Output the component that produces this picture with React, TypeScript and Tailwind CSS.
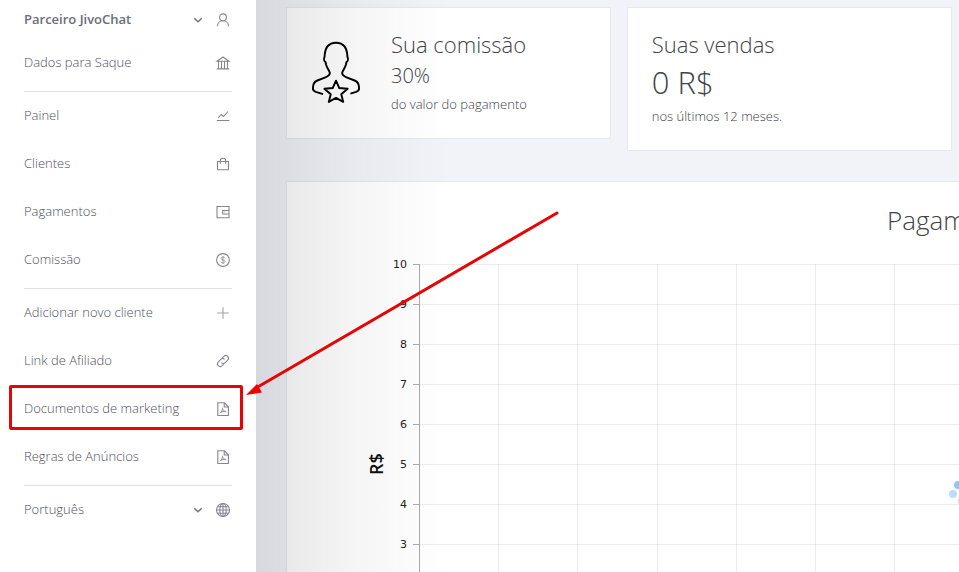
import type { ReactNode } from 'react';

const ICONS: Record<string, ReactNode> = {
  user: (
    <>
      <circle cx="9" cy="6.3" r="3.4" />
      <path d="M3.4 15.2c.1-3 2.3-5.5 5.6-5.5s5.5 2.5 5.6 5.5" />
    </>
  ),
  bank: <path d="M3 7.3 9 3l6 4.3ZM2.8 14.9h12.4M4.5 7.5v7M7.5 7.5v7M10.5 7.5v7M13.5 7.5v7" />,
  chart: <path d="M2.8 13.5h12.6M4 11l3.2-3.5 2.3 2L14 4.5" />,
  bag: <path d="M3.5 6.5h11v8.2h-11ZM6.3 8.7V6a2.7 2.7 0 0 1 5.4 0v2.7" />,
  wallet: (
    <>
      <path d="M3 3.5h12v11.3H3ZM15 7.5H8.7V11H15" />
      <circle cx="10.7" cy="9.2" r=".1" />
    </>
  ),
  dollar: (
    <>
      <circle cx="9" cy="9" r="6.4" />
      <path d="M11 7.4c-.1-.8-.9-1.3-2-1.3s-2 .5-2 1.4c0 2 4.1.9 4.1 3 0 .9-.9 1.5-2.1 1.500s-2-.6-2.1-1.500M9 5v8" strokeWidth=".8" />
    </>
  ),
  plus: <path d="M9 3.2v11.6M3.2 9h11.6" strokeOpacity=".75" />,
  link: (
    <>
      <path d="m8.3 5.9 1.8-1.8a2.7 2.7 0 0 1 3.8 3.8l-2.7 2.7a2.7 2.7 0 0 1-3.8 0" />
      <path d="m9.7 12.1-1.8 1.8a2.7 2.7 0 0 1-3.8-3.8l2.7-2.7a2.7 2.7 0 0 1 3.8 0" />
    </>
  ),
  pdf: (
    <>
      <path d="M3.8 2.8h6.6l4 4v8.7H3.8ZM10.2 3v4h4" />
      <path d="M8.5 7.8c.1 2-.9 4-2.3 5.3M8.6 8.5c.3 1.7 1.5 2.9 3.5 3.3M6.8 12.3c1.3-.8 3-1 4.7-.8" strokeWidth=".9" />
    </>
  ),
  globe: (
    <>
      <circle cx="9" cy="9" r="6.5" />
      <ellipse cx="9" cy="9" rx="3.2" ry="6.5" />
      <path d="M2.5 9h13M9 2.5v13M3.6 5.7h10.8M3.6 12.3h10.8" />
    </>
  ),
};

type Item = { label: string; icon: string; dropdown?: boolean; bold?: boolean; marked?: boolean };

const GROUPS: Item[][] = [
  [
    { label: 'Parceiro JivoChat', icon: 'user', dropdown: true, bold: true },
    { label: 'Dados para Saque', icon: 'bank' },
  ],
  [
    { label: 'Painel', icon: 'chart' },
    { label: 'Clientes', icon: 'bag' },
    { label: 'Pagamentos', icon: 'wallet' },
    { label: 'Comissão', icon: 'dollar' },
  ],
  [
    { label: 'Adicionar novo cliente', icon: 'plus' },
    { label: 'Link de Afiliado', icon: 'link' },
    { label: 'Documentos de marketing', icon: 'pdf', marked: true },
    { label: 'Regras de Anúncios', icon: 'pdf' },
  ],
  [{ label: 'Português', icon: 'globe', dropdown: true }],
];

const Y_LABELS = [10, 9, 8, 7, 6, 5, 4, 3, 2, 1, 0];
const COLUMNS = Array.from({ length: 15 }, (_, i) => Math.round(132 + i * 79.2));

function Icon({ name }: { name: string }) {
  return (
    <svg width="18" height="18" viewBox="0 0 18 18" fill="none" stroke="#85858f" strokeWidth="1.1" aria-hidden="true">
      {ICONS[name]}
    </svg>
  );
}

function NavItem({ item }: { item: Item }) {
  const content = (
    <>
      <span className={item.bold ? 'font-semibold text-[#6c6c7a]' : 'font-light'}>{item.label}</span>
      <span className="flex items-center gap-2.5">
        {item.dropdown && (
          <svg width="12" height="12" viewBox="0 0 12 12" fill="none" stroke="#74747e" strokeWidth="1.5" aria-hidden="true">
            <path d="m2.3 4.3 3.7 3.5 3.7-3.5" />
          </svg>
        )}
        <Icon name={item.icon} />
      </span>
    </>
  );
  const row = 'flex w-full items-center justify-between text-left';

  return (
    <li className={item.bold ? 'flex h-[39px]' : 'relative flex h-12'}>
      {item.dropdown ? (
        <button type="button" className={row}>{content}</button>
      ) : (
        <a href="#" className={row}>{content}</a>
      )}
      {item.marked && (
        <span className="pointer-events-none absolute top-0 -right-[11px] bottom-[3px] -left-[15px] rounded-xs border-3 border-[#e60505]" />
      )}
    </li>
  );
}

function PartnerIcon() {
  return (
    <svg width="50" height="64" viewBox="0 0 52 66" fill="none" stroke="#000" strokeWidth="2" strokeLinejoin="round" aria-hidden="true">
      <path d="M12.5 56 5 53.6c-2-.7-3-1.5-3-3.5 0-4 .7-6.6 4-8l9-3.5c3.5-1.4 4.5-2.5 4.6-4.5 0-2.3-2.6-4.2-3.8-8.3l-.7-3.2c-1.6-1-2-3.5-1-5.2C14.3 8 18.5 2.5 26 2.5S37.7 8 37.9 17.4c1 1.7.6 4.2-1 5.2l-.7 3.2c-1.2 4.1-3.8 6-3.8 8.3.1 2 1.1 3.1 4.6 4.5l9 3.5c3.3 1.4 4 4 4 8 0 2-1 2.8-3 3.5L41 55.5" />
      <path d="m26 42 3.4 7.7 8.7.8-6.6 5.6 2 8L26 59.9l-7.5 4.2 2-8-6.6-5.6 8.7-.8Z" />
    </svg>
  );
}

function Chart() {
  return (
    <svg className="block h-[440px] w-full" role="img" aria-label="Pagamentos em R$">
      <g stroke="#000" strokeOpacity=".07" shapeRendering="crispEdges">
        {Y_LABELS.map((label, i) => (
          <line key={label} x1="132" x2="1241" y1={14 + i * 40} y2={14 + i * 40} />
        ))}
        {COLUMNS.map(x => (
          <line key={x} x1={x} x2={x} y1="14" y2="414" />
        ))}
      </g>
      <g stroke="#aaa" shapeRendering="crispEdges">
        <line x1="132" x2="132" y1="14" y2="414" />
        {Y_LABELS.map((label, i) => (
          <line key={label} x1="126" x2="132" y1={14 + i * 40} y2={14 + i * 40} />
        ))}
      </g>
      <g fill="#222" fontSize="11" textAnchor="end" fontFamily="'DejaVu Sans', sans-serif">
        {Y_LABELS.map((label, i) => (
          <text key={label} x="120" y={18 + i * 40}>{label}</text>
        ))}
      </g>
      <text
        transform="translate(96 214) rotate(-90)"
        fill="#111"
        fontSize="18"
        fontWeight="600"
        textAnchor="middle"
        fontFamily="'Open Sans', sans-serif"
      >
        R$
      </text>
      <g fill="#8cc8ff">
        <circle cx="671" cy="235" r="4" />
        <circle cx="666" cy="244" r="4" opacity=".6" />
        <circle cx="675" cy="251" r="4" opacity=".7" />
      </g>
    </svg>
  );
}

export default function App() {
  return (
    <div className="relative flex h-screen overflow-hidden bg-[#f1f3f8] font-['Open_Sans','Noto_Sans',sans-serif] text-[#424347]">
      <nav className="w-64 shrink-0 bg-white px-6 text-[13px] text-[#50505c]" aria-label="Menu">
        {GROUPS.map((group, i) => (
          <ul key={i} className="border-b border-[#e1e1e6] pb-1 last:border-0">
            {group.map(item => (
              <NavItem key={item.label} item={item} />
            ))}
          </ul>
        ))}
      </nav>

      <main className="relative min-w-0 flex-1 overflow-hidden px-[30px] pt-[7px]">
        <div className="min-w-[1347px]">
          <div className="grid grid-cols-4 items-start gap-4">
            <section className="flex gap-[30px] border border-[#e5e8ed] bg-white px-6 pt-[22px] pb-6">
              <div className="flex shrink-0 items-center">
                <PartnerIcon />
              </div>
              <div className="whitespace-nowrap">
                <h2 className="text-[22px] leading-7 font-light">Sua comissão</h2>
                <p className="text-xl leading-9 font-light">30%</p>
                <p className="text-[13px] leading-5 font-light">do valor do pagamento</p>
              </div>
            </section>
            <section className="border border-[#e5e8ed] bg-white px-6 pt-[22px] pb-6">
              <h2 className="text-[22px] leading-7 font-light">Suas vendas</h2>
              <p className="text-[31px] leading-12 font-light">0 R$</p>
              <p className="text-[13px] leading-5 font-light">nos últimos 12 meses.</p>
            </section>
          </div>

          <section className="mt-[30px] border border-[#e5e8ed] bg-white pt-5">
            <h2 className="h-12 text-center text-[26px] leading-9 font-light">Pagamentos</h2>
            <Chart />
          </section>
        </div>
        <div className="pointer-events-none absolute inset-y-0 left-0 w-48 bg-linear-to-r from-black/11 via-black/4 to-transparent" />
      </main>

      <svg className="pointer-events-none absolute top-[205px] left-[240px]" width="330" height="200" aria-hidden="true">
        <path d="M317 8 16 183" stroke="#e60505" strokeWidth="3" strokeLinecap="round" />
        <path d="m6 190 11-11 5 8.5Z" fill="#f00000" />
      </svg>
    </div>
  );
}
